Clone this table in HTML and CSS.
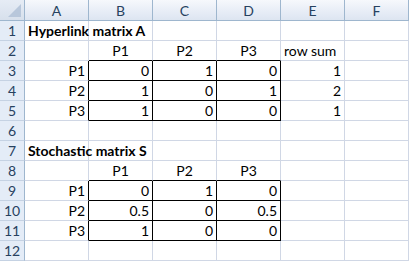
FILE: index.html
```html
<!DOCTYPE html>
<html>
<head>
<meta charset="utf-8">
<link rel="stylesheet" href="styles.css">
</head>
<body>
<div class="sheet">
  <div class="corner"><span class="tri"></span></div>
  <div class="ch">A</div><div class="ch">B</div><div class="ch">C</div><div class="ch">D</div><div class="ch">E</div><div class="ch">F</div>

  <div class="rh">1</div>
  <div class="c title">Hyperlink matrix A</div><div class="c"></div><div class="c"></div><div class="c"></div><div class="c"></div><div class="c"></div>

  <div class="rh">2</div>
  <div class="c"></div><div class="c ctr bb">P1</div><div class="c ctr bb">P2</div><div class="c ctr bb">P3</div><div class="c">row sum</div><div class="c"></div>

  <div class="rh">3</div>
  <div class="c num br">P1</div><div class="c num box">0</div><div class="c num box">1</div><div class="c num box">0</div><div class="c num">1</div><div class="c"></div>

  <div class="rh">4</div>
  <div class="c num br">P2</div><div class="c num box">1</div><div class="c num box">0</div><div class="c num box">1</div><div class="c num">2</div><div class="c"></div>

  <div class="rh">5</div>
  <div class="c num br">P3</div><div class="c num box">1</div><div class="c num box">0</div><div class="c num box">0</div><div class="c num">1</div><div class="c"></div>

  <div class="rh">6</div>
  <div class="c"></div><div class="c"></div><div class="c"></div><div class="c"></div><div class="c"></div><div class="c"></div>

  <div class="rh">7</div>
  <div class="c title">Stochastic matrix S</div><div class="c"></div><div class="c"></div><div class="c"></div><div class="c"></div><div class="c"></div>

  <div class="rh">8</div>
  <div class="c"></div><div class="c ctr bb">P1</div><div class="c ctr bb">P2</div><div class="c ctr bb">P3</div><div class="c"></div><div class="c"></div>

  <div class="rh">9</div>
  <div class="c num br">P1</div><div class="c num box">0</div><div class="c num box">1</div><div class="c num box">0</div><div class="c"></div><div class="c"></div>

  <div class="rh">10</div>
  <div class="c num br">P2</div><div class="c num box">0.5</div><div class="c num box">0</div><div class="c num box">0.5</div><div class="c"></div><div class="c"></div>

  <div class="rh">11</div>
  <div class="c num br">P3</div><div class="c num box">1</div><div class="c num box">0</div><div class="c num box">0</div><div class="c"></div><div class="c"></div>

  <div class="rh">12</div>
  <div class="c"></div><div class="c"></div><div class="c"></div><div class="c"></div><div class="c"></div><div class="c"></div>
</div>
</body>
</html>
```

FILE: styles.css
```css
html, body {
  margin: 0;
  padding: 0;
  background: #ffffff;
}

.sheet {
  display: grid;
  grid-template-columns: 25px repeat(6, 64px);
  grid-template-rows: 21px repeat(12, 20px);
  font-family: Lato, "Liberation Sans", sans-serif;
  font-size: 14px;
  color: #000;
}

.sheet > div {
  box-sizing: border-box;
  white-space: nowrap;
  overflow: visible;
  min-width: 0;
}

.corner {
  position: relative;
  background: linear-gradient(#e6ecf5, #d7e0ec);
  border-right: 1px solid #9eb6ce;
  border-bottom: 1px solid #9eb6ce;
}

.tri {
  position: absolute;
  right: 3px;
  bottom: 3px;
  width: 0;
  height: 0;
  border-left: 13px solid transparent;
  border-bottom: 13px solid #b8c7db;
}

.ch {
  background: linear-gradient(#f6f8fc 0%, #e9eef7 50%, #dde5f1 100%);
  border-right: 1px solid #9eb6ce;
  border-bottom: 1px solid #9eb6ce;
  display: flex;
  align-items: center;
  justify-content: center;
  color: #27415f;
  font-size: 14px;
  padding-top: 1px;
}

.rh {
  background: #e4ecf7;
  border-right: 1px solid #9eb6ce;
  border-bottom: 1px solid #c5d2e3;
  display: flex;
  align-items: flex-end;
  justify-content: center;
  color: #27415f;
  line-height: 17px;
  padding-bottom: 1px;
}

.c {
  border-right: 1px solid #d0d7e5;
  border-bottom: 1px solid #d0d7e5;
  display: flex;
  align-items: flex-end;
  padding: 0 3px 1px 3px;
  line-height: 17px;
  position: relative;
}

.title {
  font-weight: bold;
  overflow: visible;
  z-index: 1;
}

.num {
  justify-content: flex-end;
}

.ctr {
  justify-content: center;
}

.bb {
  border-bottom-color: #000;
}

.br {
  border-right-color: #000;
}

.box {
  border-right-color: #000;
  border-bottom-color: #000;
}
```
